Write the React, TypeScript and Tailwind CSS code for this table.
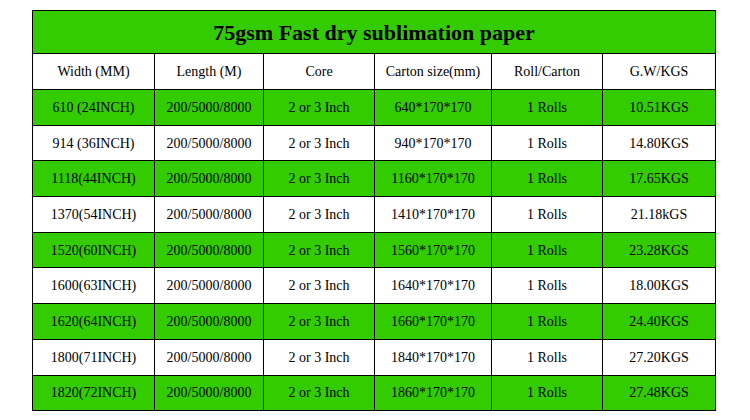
import React from 'react';

const rows = [
  ['610 (24INCH)', '640*170*170', '10.51KGS'],
  ['914 (36INCH)', '940*170*170', '14.80KGS'],
  ['1118(44INCH)', '1160*170*170', '17.65KGS'],
  ['1370(54INCH)', '1410*170*170', '21.18kGS'],
  ['1520(60INCH)', '1560*170*170', '23.28KGS'],
  ['1600(63INCH)', '1640*170*170', '18.00KGS'],
  ['1620(64INCH)', '1660*170*170', '24.40KGS'],
  ['1800(71INCH)', '1840*170*170', '27.20KGS'],
  ['1820(72INCH)', '1860*170*170', '27.48KGS'],
];

const headers = ['Width (MM)', 'Length (M)', 'Core', 'Carton size(mm)', 'Roll/Carton', 'G.W/KGS'];

export default function App() {
  return (
    <div className="w-[750px] h-[420px] bg-white pt-[10px] pl-[32px] font-[family-name:'Liberation_Serif','Times_New_Roman',serif] text-black">
      <table className="table-fixed border-collapse w-[683px] border border-black text-[14px] text-center">
        <colgroup>
          <col className="w-[122px]" />
          <col className="w-[109px]" />
          <col className="w-[111px]" />
          <col className="w-[117px]" />
          <col className="w-[111px]" />
          <col className="w-[113px]" />
        </colgroup>
        <tbody>
          <tr className="h-[43px] bg-[#33cc00]">
            <td colSpan={6} className="border border-black text-[22px] font-bold">
              75gsm Fast dry sublimation paper
            </td>
          </tr>
          <tr className="h-[36px] bg-white">
            {headers.map((h) => (
              <td key={h} className="border border-black">{h}</td>
            ))}
          </tr>
          {rows.map((r, i) => (
            <tr key={r[0]} className={`h-[35.7px] ${i % 2 === 0 ? 'bg-[#33cc00]' : 'bg-white'}`}>
              <td className="border border-black">{r[0]}</td>
              <td className="border border-black">200/5000/8000</td>
              <td className="border border-black">2 or 3 Inch</td>
              <td className="border border-black">{r[1]}</td>
              <td className="border border-black">1 Rolls</td>
              <td className="border border-black">{r[2]}</td>
            </tr>
          ))}
        </tbody>
      </table>
    </div>
  );
}
